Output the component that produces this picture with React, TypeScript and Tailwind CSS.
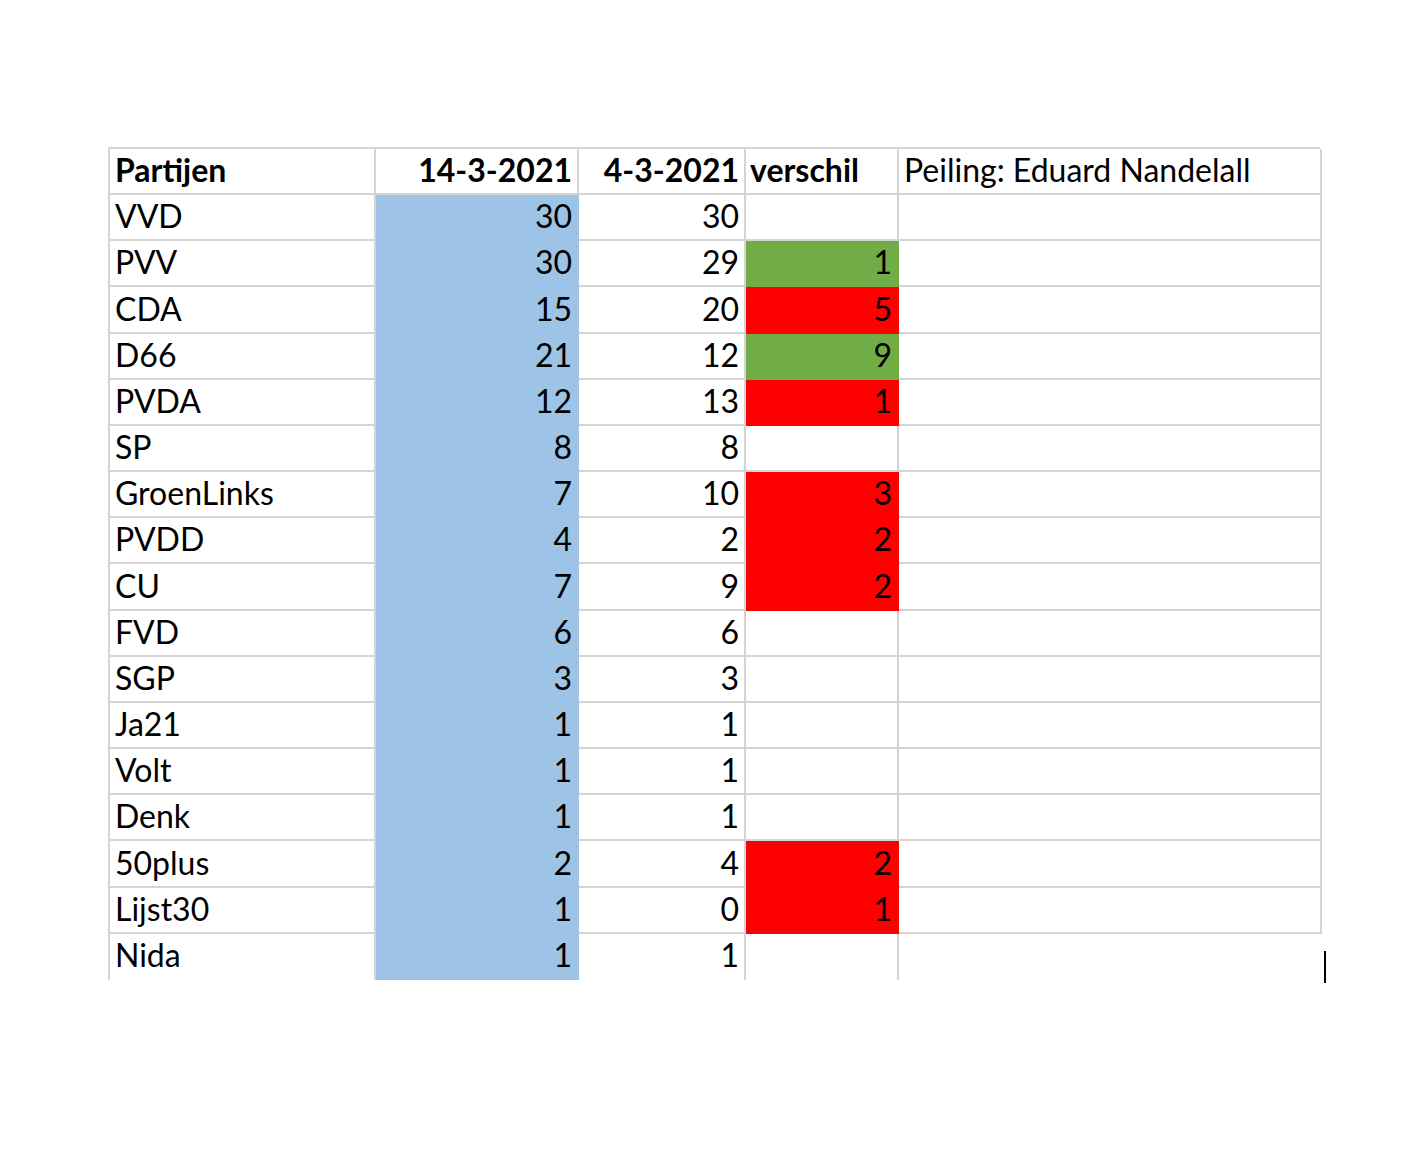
const rows: [string, number, number, number | null, "g" | "r" | null][] = [
  ["VVD", 30, 30, null, null],
  ["PVV", 30, 29, 1, "g"],
  ["CDA", 15, 20, 5, "r"],
  ["D66", 21, 12, 9, "g"],
  ["PVDA", 12, 13, 1, "r"],
  ["SP", 8, 8, null, null],
  ["GroenLinks", 7, 10, 3, "r"],
  ["PVDD", 4, 2, 2, "r"],
  ["CU", 7, 9, 2, "r"],
  ["FVD", 6, 6, null, null],
  ["SGP", 3, 3, null, null],
  ["Ja21", 1, 1, null, null],
  ["Volt", 1, 1, null, null],
  ["Denk", 1, 1, null, null],
  ["50plus", 2, 4, 2, "r"],
  ["Lijst30", 1, 0, 1, "r"],
  ["Nida", 1, 1, null, null],
];

const cell = "flex items-end pb-[7px] border-r-2 border-b-2 border-[#d4d4d4]";
const lastCell = "flex items-end pb-[9px] border-r-2 border-[#d4d4d4]";

export default function App() {
  return (
    <div className="min-h-[1159px] bg-white pt-[147px] pl-[108px] text-[32px] leading-none text-black [font-family:Lato,'Open_Sans',sans-serif]">
      <div className="grid w-[1212px] grid-cols-[266px_203px_167px_153px_423px] grid-rows-[repeat(18,46.17px)] border-l-2 border-t-2 border-[#d4d4d4]">
        <div className={`${cell} pl-[5px] font-bold`}>Partijen</div>
        <div className={`${cell} justify-end pr-[5px] font-bold`}>14-3-2021</div>
        <div className={`${cell} justify-end pr-[5px] font-bold`}>4-3-2021</div>
        <div className={`${cell} pl-[4px] font-bold`}>verschil</div>
        <div className={`${cell} pl-[5px]`}>Peiling: Eduard Nandelall</div>
        {rows.map(([name, a, b, d, c], i) => {
          const last = i === rows.length - 1;
          const cl = last ? lastCell : cell;
          const diffColor =
            c === "g"
              ? "bg-[#70ad47] border-[#70ad47]"
              : c === "r"
              ? "bg-[#ff0000] border-[#ff0000]"
              : "border-[#d4d4d4]";
          return [
            <div key={name + "n"} className={`${cl} pl-[5px]`}>
              {name}
            </div>,
            <div key={name + "a"} className="flex items-end justify-end pb-[7px] pr-[5px] bg-[#9dc3e6] border-b-2 border-r-2 border-[#9dc3e6]">
              {a}
            </div>,
            <div key={name + "b"} className={`${cl} justify-end pr-[5px]`}>
              {b}
            </div>,
            <div
              key={name + "d"}
              className={`flex items-end justify-end pr-[5px] border-r-2 ${last ? "pb-[9px]" : "pb-[7px] border-b-2"} ${diffColor}`}
            >
              {d ?? ""}
            </div>,
            last ? (
              <div key={name + "p"} className="flex items-end justify-end">
                <span className="mr-[-4px] mb-[-3px] h-[32px] w-[2px] bg-black" />
              </div>
            ) : (
              <div key={name + "p"} className={cell} />
            ),
          ];
        })}
      </div>
    </div>
  );
}
